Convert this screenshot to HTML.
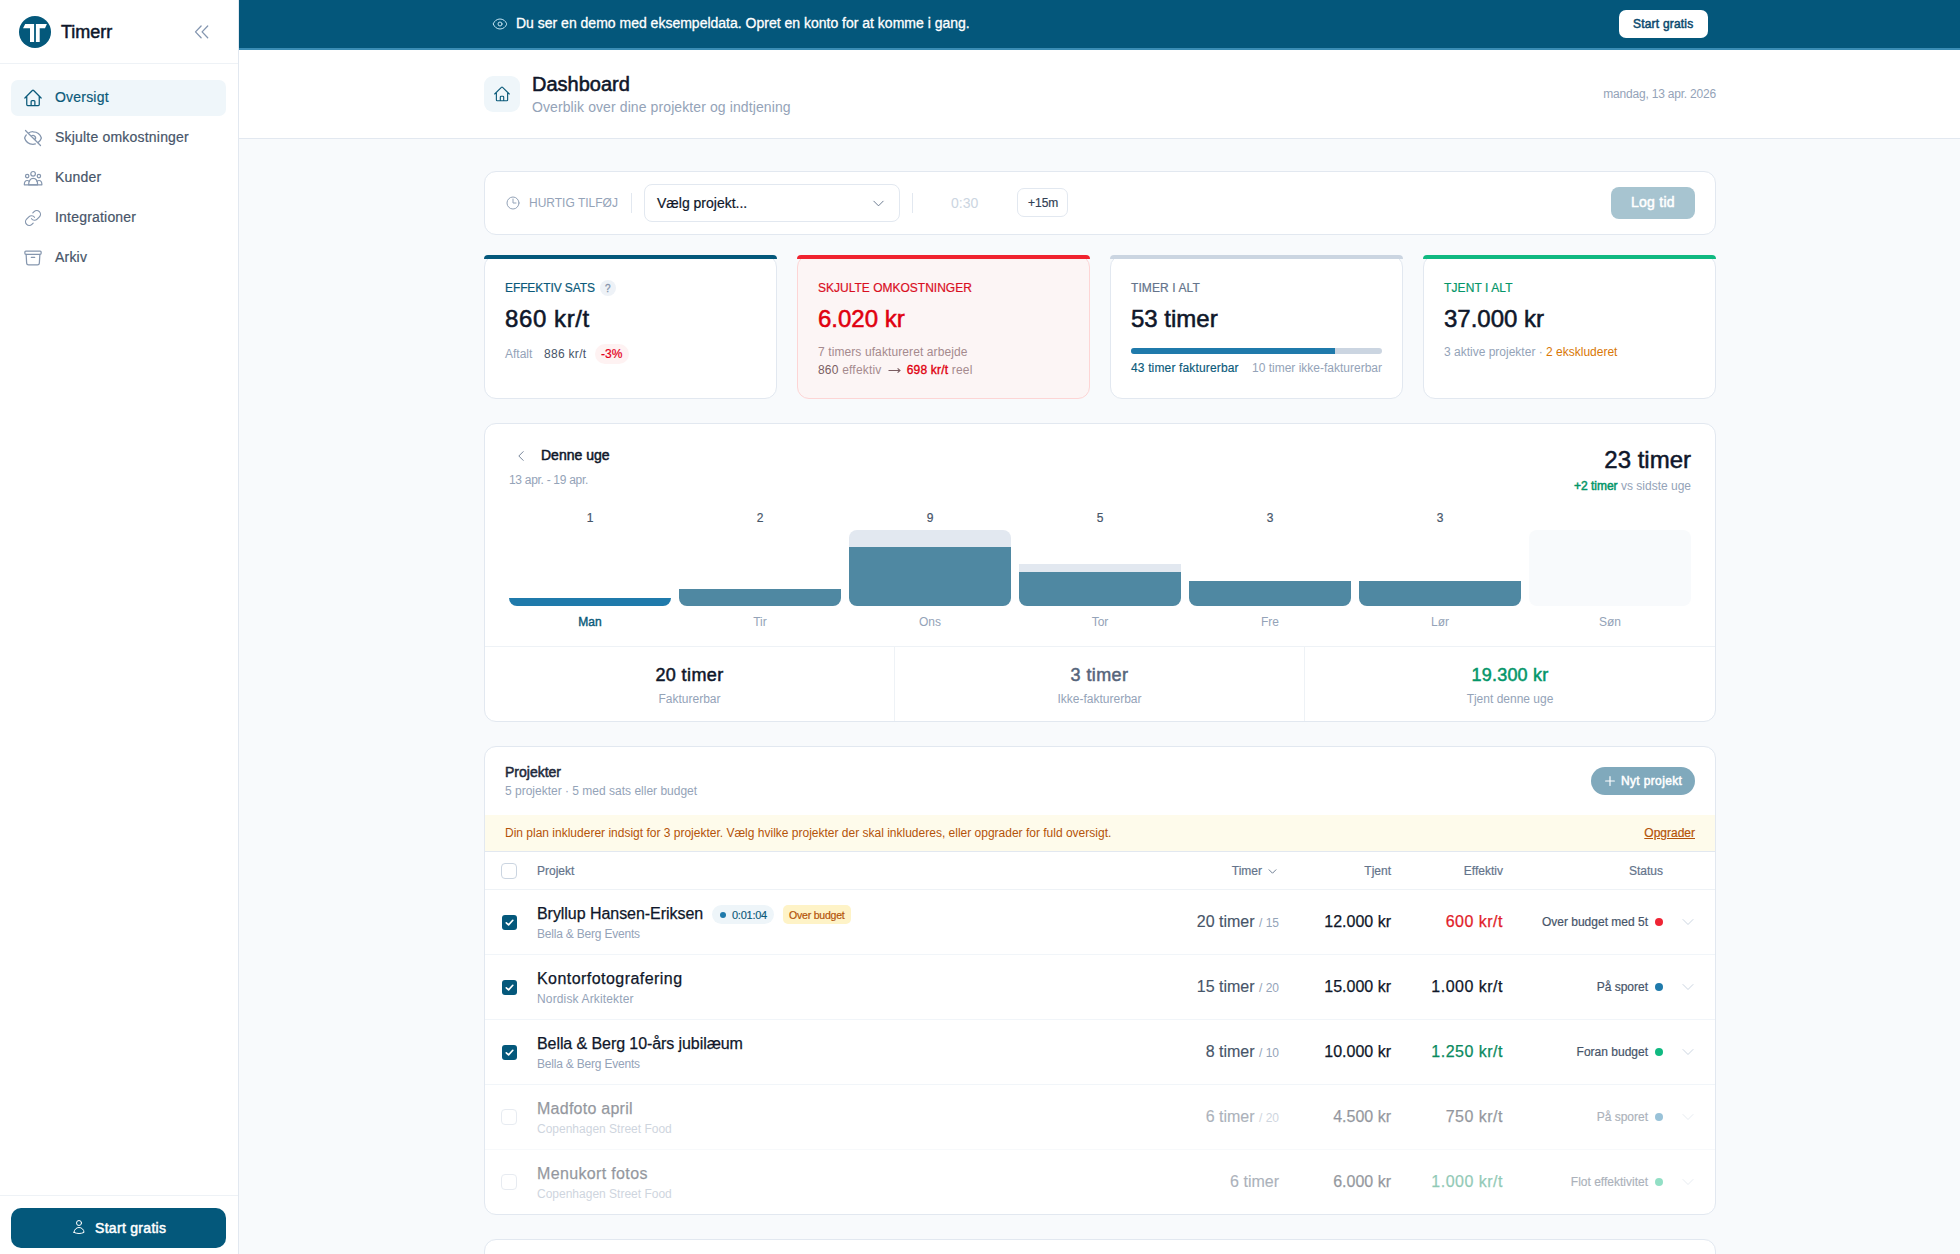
<!DOCTYPE html>
<html lang="da">
<head>
<meta charset="utf-8">
<title>Timerr - Dashboard</title>
<style>
*{box-sizing:border-box;margin:0;padding:0}
html,body{width:1960px;height:1254px;overflow:hidden}
body{background:#f8fafc;font-family:"Liberation Sans",sans-serif;color:#0f172a;position:relative}
.a{position:absolute}
.t{position:absolute;white-space:nowrap;line-height:1}
.b{-webkit-text-stroke:0.5px currentColor}
.m{-webkit-text-stroke:0.25px currentColor}
svg{display:block}
.ico{fill:none;stroke:currentColor;stroke-width:1.5;stroke-linecap:round;stroke-linejoin:round}
/* sidebar */
#side{left:0;top:0;width:239px;height:1254px;background:#fff;border-right:1px solid #e2e8f0}
.nav{left:11px;width:215px;height:36px;border-radius:7px}
.nav.on{background:#eff6fa}
.navt{left:55px;font-size:14px;color:#475569;letter-spacing:0.2px;-webkit-text-stroke:0.2px currentColor}
.navi{left:23px;color:#8596ae}
/* cards */
.card{position:absolute;background:#fff;border:1px solid #e2e8f0;border-radius:12px}
.stat{top:255px;width:293px;height:144px}
.band{position:absolute;top:255px;width:293px;height:4px;border-radius:12px 12px 0 0}
.lbl{font-size:12px;letter-spacing:0.1px;-webkit-text-stroke:0.2px currentColor}
.big{font-size:24px;-webkit-text-stroke:0.55px currentColor}
.mut{color:#94a3b8}
</style>
</head>
<body>

<!-- SIDEBAR -->
<div id="side" class="a">
  <div class="a" style="left:0;top:63px;width:238px;height:1px;background:#eef2f6"></div>
  <svg class="a" style="left:19px;top:16px" width="32" height="32" viewBox="0 0 32 32">
    <circle cx="16" cy="16" r="16" fill="#04587b"/>
    <path d="M6.2 8H15.1V26H11V12.3H4Z M16.9 8H27.9L26 12.3H20.7V26H16.9Z" fill="#fff"/>
  </svg>
  <div class="t" style="left:61px;top:22.8px;font-size:18px;color:#0f172a;-webkit-text-stroke:0.5px #0f172a">Timerr</div>
  <svg class="a" style="left:188px;top:20px" width="28" height="26" viewBox="0 0 28 26"><path d="M13.1 6 7.5 11.9 13.1 17.8M19.7 6 14.1 11.9 19.7 17.8" fill="none" stroke="#8496b0" stroke-width="1.3" stroke-linecap="round" stroke-linejoin="round"/></svg>

  <div class="a nav on" style="top:80px"></div>
  <svg class="a ico navi" style="top:88px;color:#0b5a7a" width="20" height="20" viewBox="0 0 24 24"><path d="m2.25 12 8.954-8.955c.44-.439 1.152-.439 1.591 0L21.75 12M4.5 9.75v10.125c0 .621.504 1.125 1.125 1.125H9.75v-4.875c0-.621.504-1.125 1.125-1.125h2.25c.621 0 1.125.504 1.125 1.125V21h4.125c.621 0 1.125-.504 1.125-1.125V9.75M8.25 21h8.25"/></svg>
  <div class="t navt" style="top:90.35px;color:#0b5a7a">Oversigt</div>

  <svg class="a ico navi" style="top:128px" width="20" height="20" viewBox="0 0 24 24"><path d="M3.98 8.223A10.477 10.477 0 0 0 1.934 12C3.226 16.338 7.244 19.5 12 19.5c.993 0 1.953-.138 2.863-.395M6.228 6.228A10.451 10.451 0 0 1 12 4.5c4.756 0 8.773 3.162 10.065 7.498a10.522 10.522 0 0 1-4.293 5.774M6.228 6.228 3 3m3.228 3.228 3.65 3.65m7.894 7.894L21 21m-3.228-3.228-3.65-3.65m0 0a3 3 0 1 0-4.243-4.243m4.242 4.242L9.88 9.88"/></svg>
  <div class="t navt" style="top:130.35px">Skjulte omkostninger</div>

  <svg class="a navi" style="top:168px" width="20" height="20" viewBox="0 0 20 20" fill="none" stroke="currentColor" stroke-width="1.2" stroke-linecap="round" stroke-linejoin="round"><circle cx="10.1" cy="5.8" r="2.3"/><circle cx="4.2" cy="8.1" r="1.7"/><circle cx="15.9" cy="8.1" r="1.7"/><path d="M5.6 16.8C5.6 12.8 7.6 10.4 10.1 10.4S14.6 12.8 14.6 16.8Z"/><path d="M1.3 16.8C1.3 14.2 2.5 12.5 4.2 12.5 4.9 12.5 5.6 12.8 6.2 13.3M18.9 16.8C18.9 14.2 17.7 12.5 16 12.5 15.3 12.5 14.6 12.8 14 13.3M1.3 16.8H18.9"/></svg>
  <div class="t navt" style="top:170.35px">Kunder</div>

  <svg class="a navi" style="top:209px;left:24px" width="18" height="18" viewBox="0 0 24 24" fill="none" stroke="currentColor" stroke-width="1.6" stroke-linecap="round" stroke-linejoin="round"><path d="M10 13a5 5 0 0 0 7.54.54l3-3a5 5 0 0 0-7.07-7.07l-1.72 1.71"/><path d="M14 11a5 5 0 0 0-7.54-.54l-3 3a5 5 0 0 0 7.07 7.07l1.71-1.71"/></svg>
  <div class="t navt" style="top:210.35px">Integrationer</div>

  <svg class="a ico navi" style="top:248px" width="20" height="20" viewBox="0 0 24 24"><path d="m20.25 7.5-.625 10.632a2.25 2.25 0 0 1-2.247 2.118H6.622a2.25 2.25 0 0 1-2.247-2.118L3.75 7.5M10 11.25h4M3.375 7.5h17.25c.621 0 1.125-.504 1.125-1.125v-1.5c0-.621-.504-1.125-1.125-1.125H3.375c-.621 0-1.125.504-1.125 1.125v1.5c0 .621.504 1.125 1.125 1.125Z"/></svg>
  <div class="t navt" style="top:250.35px">Arkiv</div>

  <div class="a" style="left:0;top:1195px;width:238px;height:1px;background:#eef2f6"></div>
  <div class="a" style="left:11px;top:1208px;width:215px;height:40px;border-radius:10px;background:#04587b"></div>
  <svg class="a ico" style="left:71px;top:1219px;color:#fff" width="16" height="16" viewBox="0 0 24 24"><path d="M15.75 6a3.75 3.75 0 1 1-7.5 0 3.75 3.75 0 0 1 7.5 0ZM4.501 20.118a7.5 7.5 0 0 1 14.998 0A17.933 17.933 0 0 1 12 21.75c-2.676 0-5.216-.584-7.499-1.632Z"/></svg>
  <div class="t b" style="left:95px;top:1220.95px;font-size:14px;color:#fff;letter-spacing:0.3px">Start gratis</div>
</div>

<!-- BANNER -->
<div class="a" style="left:239px;top:0;width:1721px;height:50px;background:#04577b;border-bottom:2px solid #3a8db5"></div>
<svg class="a ico" style="left:492px;top:16px;color:#c4e4f2" width="16" height="16" viewBox="0 0 24 24"><path d="M2.036 12.322a1.012 1.012 0 0 1 0-.639C3.423 7.51 7.36 4.5 12 4.5c4.638 0 8.573 3.007 9.963 7.178.07.207.07.431 0 .639C20.577 16.49 16.64 19.5 12 19.5c-4.638 0-8.573-3.007-9.963-7.178Z M15 12a3 3 0 1 1-6 0 3 3 0 0 1 6 0Z"/></svg>
<div class="t" style="left:516px;top:16.15px;font-size:14px;color:#fff;-webkit-text-stroke:0.3px #fff">Du ser en demo med eksempeldata. Opret en konto for at komme i gang.</div>
<div class="a" style="left:1619px;top:10px;width:89px;height:28px;border-radius:7px;background:#fff"></div>
<div class="t b" style="left:1633px;top:17.64px;font-size:12px;color:#0c4a6e;letter-spacing:0.2px">Start gratis</div>

<!-- HEADER -->
<div class="a" style="left:239px;top:50px;width:1721px;height:89px;background:#fff;border-bottom:1px solid #e2e8f0"></div>
<div class="a" style="left:484px;top:76px;width:36px;height:36px;border-radius:9px;background:#eff6fa"></div>
<svg class="a ico" style="left:493px;top:85px;color:#0b5a7a" width="18" height="18" viewBox="0 0 24 24"><path d="m2.25 12 8.954-8.955c.44-.439 1.152-.439 1.591 0L21.75 12M4.5 9.75v10.125c0 .621.504 1.125 1.125 1.125H9.75v-4.875c0-.621.504-1.125 1.125-1.125h2.25c.621 0 1.125.504 1.125 1.125V21h4.125c.621 0 1.125-.504 1.125-1.125V9.75M8.25 21h8.25"/></svg>
<div class="t" style="left:532px;top:74.17px;font-size:20px;color:#0f172a;-webkit-text-stroke:0.55px #0f172a">Dashboard</div>
<div class="t mut" style="left:532px;top:100.15px;font-size:14px;letter-spacing:0.1px">Overblik over dine projekter og indtjening</div>
<div class="t mut" style="right:244px;top:88.44px;font-size:12px;letter-spacing:-0.2px">mandag, 13 apr. 2026</div>

<!-- QUICK ADD -->
<div class="card" style="left:484px;top:171px;width:1232px;height:64px"></div>
<svg class="a ico" style="left:505px;top:195px;color:#94a3b8" width="16" height="16" viewBox="0 0 24 24"><path d="M12 6v6h4.5m4.5 0a9 9 0 1 1-18 0 9 9 0 0 1 18 0Z"/></svg>
<div class="t mut" style="left:529px;top:196.64px;font-size:12px">HURTIG TILFØJ</div>
<div class="a" style="left:631px;top:193px;width:1px;height:20px;background:#e2e8f0"></div>
<div class="a" style="left:644px;top:184px;width:256px;height:38px;border:1px solid #e2e8f0;border-radius:8px;background:#fff"></div>
<div class="t" style="left:657px;top:195.75px;font-size:14px;color:#0f172a;-webkit-text-stroke:0.2px #0f172a">Vælg projekt...</div>
<svg class="a ico" style="left:871px;top:196px;color:#64748b" width="15" height="15" viewBox="0 0 24 24"><path d="m19.5 8.25-7.5 7.5-7.5-7.5"/></svg>
<div class="a" style="left:912px;top:193px;width:1px;height:20px;background:#e2e8f0"></div>
<div class="t" style="left:951px;top:195.75px;font-size:14px;color:#cbd5e1">0:30</div>
<div class="a" style="left:1017px;top:188px;width:51px;height:29px;border:1px solid #e2e8f0;border-radius:7px;background:#fff"></div>
<div class="t" style="left:1028px;top:197px;font-size:12px;color:#334155;-webkit-text-stroke:0.2px #334155">+15m</div>
<div class="a" style="left:1611px;top:187px;width:84px;height:32px;border-radius:8px;background:#a7c4d0"></div>
<div class="t b" style="left:1631px;top:195.15px;font-size:14px;color:#fff;letter-spacing:0.25px">Log tid</div>

<!-- STAT CARDS -->
<div class="card stat" style="left:484px;"></div><div class="band" style="left:484px;background:#04587b"></div>
<div class="t lbl" style="left:505px;top:281.64px;color:#0b5a7a;letter-spacing:-0.1px">EFFEKTIV SATS</div>
<div class="a" style="left:600px;top:280px;width:16px;height:16px;border-radius:8px;background:#eef2f7"></div>
<div class="t" style="left:605px;top:283.5px;font-size:10px;color:#8594ab;-webkit-text-stroke:0.3px #8594ab">?</div>
<div class="t big" style="left:505px;top:307.28px;color:#0f172a;letter-spacing:0.6px">860 kr/t</div>
<div class="t mut" style="left:505px;top:347.64px;font-size:12px">Aftalt</div>
<div class="t" style="left:544px;top:347.64px;font-size:12px;color:#475569;letter-spacing:0.3px">886 kr/t</div>
<div class="a" style="left:595px;top:344px;width:34px;height:20px;border-radius:10px;background:#fef2f2"></div>
<div class="t" style="left:601px;top:347.64px;font-size:12px;color:#e3001b;-webkit-text-stroke:0.2px #e3001b">-3%</div>

<div class="card stat" style="left:797px;border-color:#fdd5d5;background:#fcf5f5;"></div><div class="band" style="left:797px;background:#f0232f"></div>
<div class="t lbl" style="left:818px;top:281.64px;color:#d90f1f;letter-spacing:0px">SKJULTE OMKOSTNINGER</div>
<div class="t big" style="left:818px;top:307.28px;color:#e0000f">6.020 kr</div>
<div class="t" style="left:818px;top:345.74px;font-size:12px;color:#a58a8e;letter-spacing:0.1px">7 timers ufaktureret arbejde</div>
<div class="t" style="left:818px;top:363.54px;font-size:12px;color:#a58a8e;letter-spacing:0.2px"><span style="color:#7a5d62">860</span> effektiv <svg style="display:inline-block;vertical-align:middle;margin:0 2px 0 3px" width="13" height="8" viewBox="0 0 13 8"><path d="M0.5 4.5H12M9.6 2.3 12 4.5 9.6 6.7" fill="none" stroke="#7a5d62" stroke-width="1.1"/></svg> <span style="color:#e0000f;-webkit-text-stroke:0.35px #e0000f">698 kr/t</span> reel</div>

<div class="card stat" style="left:1110px;"></div><div class="band" style="left:1110px;background:#cbd5e1"></div>
<div class="t lbl" style="left:1131px;top:281.64px;color:#64748b">TIMER I ALT</div>
<div class="t big" style="left:1131px;top:307.28px;color:#0f172a">53 timer</div>
<div class="a" style="left:1131px;top:348px;width:251px;height:6px;border-radius:3px;background:#cbd5e1;overflow:hidden"><div style="width:204px;height:6px;background:#1f7aab"></div></div>
<div class="t" style="left:1131px;top:361.54px;font-size:12px;color:#0b5a7a;letter-spacing:0.15px;-webkit-text-stroke:0.15px #0b5a7a">43 timer fakturerbar</div>
<div class="t mut" style="right:578px;top:361.54px;font-size:12px">10 timer ikke-fakturerbar</div>

<div class="card stat" style="left:1423px;"></div><div class="band" style="left:1423px;background:#10b981"></div>
<div class="t lbl" style="left:1444px;top:281.64px;color:#059669">TJENT I ALT</div>
<div class="t big" style="left:1444px;top:307.28px;color:#0f172a">37.000 kr</div>
<div class="t mut" style="left:1444px;top:345.84px;font-size:12px">3 aktive projekter · <span style="color:#d97706">2 ekskluderet</span></div>

<!-- WEEK CARD -->
<div class="card" style="left:484px;top:423px;width:1232px;height:299px"></div>
<svg class="a ico" style="left:514px;top:449px;color:#64748b" width="14" height="14" viewBox="0 0 24 24"><path d="M15.75 19.5 8.25 12l7.5-7.5"/></svg>
<div class="t b" style="left:541px;top:447.95px;font-size:14px;color:#0f172a">Denne uge</div>
<div class="t mut" style="left:509px;top:473.64px;font-size:12px;letter-spacing:-0.3px">13 apr. - 19 apr.</div>
<div class="t b" style="right:269px;top:447.68px;font-size:24px;color:#0f172a">23 timer</div>
<div class="t mut" style="right:269px;top:479.84px;font-size:12px"><span class="b" style="color:#059669">+2 timer</span> vs sidste uge</div>

<!--CHART-->
<div class="a" style="left:509px;top:530px;width:162px;height:76px;border-radius:8px;overflow:hidden;">
<div class="a" style="left:0;bottom:0;width:162px;height:8px;background:#1f7aab"></div>
</div>
<div class="t" style="left:509px;width:162px;text-align:center;top:511.84px;font-size:12px;color:#475569;-webkit-text-stroke:0.2px #475569">1</div>
<div class="t" style="left:509px;width:162px;text-align:center;top:616.24px;font-size:12px;color:#0b5a7a;-webkit-text-stroke:0.4px #0b5a7a">Man</div>
<div class="a" style="left:679px;top:530px;width:162px;height:76px;border-radius:8px;overflow:hidden;">
<div class="a" style="left:0;bottom:0;width:162px;height:17px;background:#4f88a2"></div>
</div>
<div class="t" style="left:679px;width:162px;text-align:center;top:511.84px;font-size:12px;color:#475569;-webkit-text-stroke:0.2px #475569">2</div>
<div class="t" style="left:679px;width:162px;text-align:center;top:616.24px;font-size:12px;color:#94a3b8">Tir</div>
<div class="a" style="left:849px;top:530px;width:162px;height:76px;border-radius:8px;overflow:hidden;">
<div class="a" style="left:0;bottom:59px;width:162px;height:17px;background:#e2e8f0"></div>
<div class="a" style="left:0;bottom:0;width:162px;height:59px;background:#4f88a2"></div>
</div>
<div class="t" style="left:849px;width:162px;text-align:center;top:511.84px;font-size:12px;color:#475569;-webkit-text-stroke:0.2px #475569">9</div>
<div class="t" style="left:849px;width:162px;text-align:center;top:616.24px;font-size:12px;color:#94a3b8">Ons</div>
<div class="a" style="left:1019px;top:530px;width:162px;height:76px;border-radius:8px;overflow:hidden;">
<div class="a" style="left:0;bottom:34px;width:162px;height:8px;background:#e2e8f0"></div>
<div class="a" style="left:0;bottom:0;width:162px;height:34px;background:#4f88a2"></div>
</div>
<div class="t" style="left:1019px;width:162px;text-align:center;top:511.84px;font-size:12px;color:#475569;-webkit-text-stroke:0.2px #475569">5</div>
<div class="t" style="left:1019px;width:162px;text-align:center;top:616.24px;font-size:12px;color:#94a3b8">Tor</div>
<div class="a" style="left:1189px;top:530px;width:162px;height:76px;border-radius:8px;overflow:hidden;">
<div class="a" style="left:0;bottom:0;width:162px;height:25px;background:#4f88a2"></div>
</div>
<div class="t" style="left:1189px;width:162px;text-align:center;top:511.84px;font-size:12px;color:#475569;-webkit-text-stroke:0.2px #475569">3</div>
<div class="t" style="left:1189px;width:162px;text-align:center;top:616.24px;font-size:12px;color:#94a3b8">Fre</div>
<div class="a" style="left:1359px;top:530px;width:162px;height:76px;border-radius:8px;overflow:hidden;">
<div class="a" style="left:0;bottom:0;width:162px;height:25px;background:#4f88a2"></div>
</div>
<div class="t" style="left:1359px;width:162px;text-align:center;top:511.84px;font-size:12px;color:#475569;-webkit-text-stroke:0.2px #475569">3</div>
<div class="t" style="left:1359px;width:162px;text-align:center;top:616.24px;font-size:12px;color:#94a3b8">Lør</div>
<div class="a" style="left:1529px;top:530px;width:162px;height:76px;border-radius:8px;overflow:hidden;background:#f8fafc;">
</div>
<div class="t" style="left:1529px;width:162px;text-align:center;top:616.24px;font-size:12px;color:#94a3b8">Søn</div>
<!--/CHART-->

<div class="a" style="left:485px;top:646px;width:1230px;height:1px;background:#eef2f6"></div>
<div class="a" style="left:894px;top:647px;width:1px;height:74px;background:#eef2f6"></div>
<div class="a" style="left:1304px;top:647px;width:1px;height:74px;background:#eef2f6"></div>
<div class="t b" style="left:485px;width:409px;text-align:center;top:665.56px;font-size:18px;color:#0f172a;letter-spacing:0.4px">20 timer</div>
<div class="t mut" style="left:485px;width:409px;text-align:center;top:692.74px;font-size:12px">Fakturerbar</div>
<div class="t b" style="left:895px;width:409px;text-align:center;top:665.56px;font-size:18px;color:#56657b;letter-spacing:0.4px">3 timer</div>
<div class="t mut" style="left:895px;width:409px;text-align:center;top:692.74px;font-size:12px">Ikke-fakturerbar</div>
<div class="t b" style="left:1305px;width:410px;text-align:center;top:665.56px;font-size:18px;color:#059669;letter-spacing:0.2px">19.300 kr</div>
<div class="t mut" style="left:1305px;width:410px;text-align:center;top:692.74px;font-size:12px">Tjent denne uge</div>

<!-- PROJECTS -->
<div class="card" style="left:484px;top:746px;width:1232px;height:469px;overflow:hidden"></div>
<!--PROJ-->
<div class="t b" style="left:505px;top:765.15px;font-size:14px;color:#1e293b">Projekter</div>
<div class="t mut" style="left:505px;top:784.94px;font-size:12px">5 projekter · 5 med sats eller budget</div>
<div class="a" style="left:1591px;top:767px;width:104px;height:28px;border-radius:14px;background:#80a9bc"></div>
<svg class="a ico" style="left:1603px;top:774px;color:#fff;stroke-width:2" width="14" height="14" viewBox="0 0 24 24"><path d="M12 4.5v15m7.5-7.5h-15"/></svg>
<div class="t b" style="left:1621px;top:775px;font-size:12px;color:#fff;letter-spacing:0.35px">Nyt projekt</div>
<div class="a" style="left:485px;top:815px;width:1230px;height:37px;background:#fefbeb;border-bottom:1px solid #e2e8f0"></div>
<div class="t" style="left:505px;top:827.44px;font-size:12px;color:#b45309">Din plan inkluderer indsigt for 3 projekter. Vælg hvilke projekter der skal inkluderes, eller opgrader for fuld oversigt.</div>
<div class="t" style="right:265px;top:827.44px;font-size:12px;color:#b45309;text-decoration:underline;-webkit-text-stroke:0.2px #b45309">Opgrader</div>
<div class="a" style="left:501px;top:863px;width:16px;height:16px;border:1px solid #cbd5e1;border-radius:4px;background:#fff"></div>
<div class="t" style="left:537px;font-size:12px;color:#64748b;top:864.64px;-webkit-text-stroke:0.2px #64748b">Projekt</div>
<div class="t" style="right:698px;font-size:12px;color:#64748b;top:864.64px;-webkit-text-stroke:0.2px #64748b">Timer</div>
<svg class="a ico" style="left:1267px;top:866px;color:#64748b;stroke-width:2" width="11" height="11" viewBox="0 0 24 24"><path d="m19.5 8.25-7.5 7.5-7.5-7.5"/></svg>
<div class="t" style="right:569px;font-size:12px;color:#64748b;top:864.64px;-webkit-text-stroke:0.2px #64748b">Tjent</div>
<div class="t" style="right:457px;font-size:12px;color:#64748b;top:864.64px;-webkit-text-stroke:0.2px #64748b">Effektiv</div>
<div class="t" style="right:297px;font-size:12px;color:#64748b;top:864.64px;-webkit-text-stroke:0.2px #64748b">Status</div>
<div class="a" style="left:485px;top:889px;width:1230px;height:1px;background:#eef2f6"></div>
<div class="a" style="left:485px;top:889px;width:1230px;height:65px;">
<div class="a" style="left:17px;top:26px;width:15px;height:15px;border-radius:3px;background:#04587b"></div>
<svg class="a" style="left:19px;top:28px" width="11" height="11" viewBox="0 0 12 12"><path d="M2.5 6.3 5 8.6 9.6 3.6" fill="none" stroke="#fff" stroke-width="1.8" stroke-linecap="round" stroke-linejoin="round"/></svg>
<div class="t" style="left:52px;top:16.66px;font-size:16px;color:#0f172a;letter-spacing:-0.05px;-webkit-text-stroke:0.25px #0f172a">Bryllup Hansen-Eriksen</div>
<div class="t mut" style="left:52px;top:38.84px;font-size:12px;letter-spacing:-0.2px">Bella &amp; Berg Events</div>
<div class="a" style="left:227px;top:16px;width:62px;height:19px;border-radius:10px;background:#eef5f9"></div>
<div class="a" style="left:235px;top:23px;width:6px;height:6px;border-radius:3px;background:#1f7aab"></div>
<div class="t" style="left:247px;top:21px;font-size:11px;color:#0b5a7a;letter-spacing:-0.25px;-webkit-text-stroke:0.15px #0b5a7a">0:01:04</div>
<div class="a" style="left:298px;top:16px;width:68px;height:19px;border-radius:5px;background:#fef3c7"></div>
<div class="t" style="left:304px;top:21.3px;font-size:10.5px;color:#b45309;letter-spacing:-0.2px;-webkit-text-stroke:0.2px #b45309">Over budget</div>
<div class="t" style="right:436px;top:25px;font-size:16px;color:#475569;-webkit-text-stroke:0.15px #475569">20 timer <span style="font-size:12px;color:#94a3b8;-webkit-text-stroke:0">/ 15</span></div>
<div class="t" style="right:324px;top:25px;font-size:16px;color:#0f172a;-webkit-text-stroke:0.25px #0f172a">12.000 kr</div>
<div class="t" style="right:212px;top:25px;font-size:16px;letter-spacing:0.5px;color:#e11d2a;-webkit-text-stroke:0.25px #e11d2a">600 kr/t</div>
<div class="t" style="right:67px;top:26.84px;font-size:12px;color:#475569;-webkit-text-stroke:0.2px #475569">Over budget med 5t</div>
<div class="a" style="left:1170px;top:29px;width:8px;height:8px;border-radius:4px;background:#ef2434"></div>
<svg class="a ico" style="left:1195px;top:25px;color:#cbd5e1" width="16" height="16" viewBox="0 0 24 24"><path d="m19.5 8.25-7.5 7.5-7.5-7.5"/></svg>
</div>
<div class="a" style="left:485px;top:954px;width:1230px;height:1px;background:#f1f5f9"></div>
<div class="a" style="left:485px;top:954px;width:1230px;height:65px;">
<div class="a" style="left:17px;top:26px;width:15px;height:15px;border-radius:3px;background:#04587b"></div>
<svg class="a" style="left:19px;top:28px" width="11" height="11" viewBox="0 0 12 12"><path d="M2.5 6.3 5 8.6 9.6 3.6" fill="none" stroke="#fff" stroke-width="1.8" stroke-linecap="round" stroke-linejoin="round"/></svg>
<div class="t" style="left:52px;top:16.66px;font-size:16px;color:#0f172a;letter-spacing:0.45px;-webkit-text-stroke:0.25px #0f172a">Kontorfotografering</div>
<div class="t mut" style="left:52px;top:38.84px;font-size:12px;letter-spacing:0.15px">Nordisk Arkitekter</div>
<div class="t" style="right:436px;top:25px;font-size:16px;color:#475569;-webkit-text-stroke:0.15px #475569">15 timer <span style="font-size:12px;color:#94a3b8;-webkit-text-stroke:0">/ 20</span></div>
<div class="t" style="right:324px;top:25px;font-size:16px;color:#0f172a;-webkit-text-stroke:0.25px #0f172a">15.000 kr</div>
<div class="t" style="right:212px;top:25px;font-size:16px;letter-spacing:0.5px;color:#0f172a;-webkit-text-stroke:0.25px #0f172a">1.000 kr/t</div>
<div class="t" style="right:67px;top:26.84px;font-size:12px;color:#475569;-webkit-text-stroke:0.2px #475569">På sporet</div>
<div class="a" style="left:1170px;top:29px;width:8px;height:8px;border-radius:4px;background:#1f7aab"></div>
<svg class="a ico" style="left:1195px;top:25px;color:#cbd5e1" width="16" height="16" viewBox="0 0 24 24"><path d="m19.5 8.25-7.5 7.5-7.5-7.5"/></svg>
</div>
<div class="a" style="left:485px;top:1019px;width:1230px;height:1px;background:#f1f5f9"></div>
<div class="a" style="left:485px;top:1019px;width:1230px;height:65px;">
<div class="a" style="left:17px;top:26px;width:15px;height:15px;border-radius:3px;background:#04587b"></div>
<svg class="a" style="left:19px;top:28px" width="11" height="11" viewBox="0 0 12 12"><path d="M2.5 6.3 5 8.6 9.6 3.6" fill="none" stroke="#fff" stroke-width="1.8" stroke-linecap="round" stroke-linejoin="round"/></svg>
<div class="t" style="left:52px;top:16.66px;font-size:16px;color:#0f172a;letter-spacing:-0.08px;-webkit-text-stroke:0.25px #0f172a">Bella &amp; Berg 10-års jubilæum</div>
<div class="t mut" style="left:52px;top:38.84px;font-size:12px;letter-spacing:-0.2px">Bella &amp; Berg Events</div>
<div class="t" style="right:436px;top:25px;font-size:16px;color:#475569;-webkit-text-stroke:0.15px #475569">8 timer <span style="font-size:12px;color:#94a3b8;-webkit-text-stroke:0">/ 10</span></div>
<div class="t" style="right:324px;top:25px;font-size:16px;color:#0f172a;-webkit-text-stroke:0.25px #0f172a">10.000 kr</div>
<div class="t" style="right:212px;top:25px;font-size:16px;letter-spacing:0.5px;color:#0a8a60;-webkit-text-stroke:0.25px #0a8a60">1.250 kr/t</div>
<div class="t" style="right:67px;top:26.84px;font-size:12px;color:#475569;-webkit-text-stroke:0.2px #475569">Foran budget</div>
<div class="a" style="left:1170px;top:29px;width:8px;height:8px;border-radius:4px;background:#10b981"></div>
<svg class="a ico" style="left:1195px;top:25px;color:#cbd5e1" width="16" height="16" viewBox="0 0 24 24"><path d="m19.5 8.25-7.5 7.5-7.5-7.5"/></svg>
</div>
<div class="a" style="left:485px;top:1084px;width:1230px;height:1px;background:#f1f5f9"></div>
<div class="a" style="left:485px;top:1084px;width:1230px;height:65px;opacity:0.45;">
<div class="a" style="left:16px;top:25px;width:16px;height:16px;border-radius:4px;border:1px solid #cbd5e1;background:#fff"></div>
<div class="t" style="left:52px;top:16.66px;font-size:16px;color:#0f172a;letter-spacing:0.25px;-webkit-text-stroke:0.25px #0f172a">Madfoto april</div>
<div class="t mut" style="left:52px;top:38.84px;font-size:12px;letter-spacing:0px">Copenhagen Street Food</div>
<div class="t" style="right:436px;top:25px;font-size:16px;color:#475569;-webkit-text-stroke:0.15px #475569">6 timer <span style="font-size:12px;color:#94a3b8;-webkit-text-stroke:0">/ 20</span></div>
<div class="t" style="right:324px;top:25px;font-size:16px;color:#0f172a;-webkit-text-stroke:0.25px #0f172a">4.500 kr</div>
<div class="t" style="right:212px;top:25px;font-size:16px;letter-spacing:0.5px;color:#0f172a;-webkit-text-stroke:0.25px #0f172a">750 kr/t</div>
<div class="t" style="right:67px;top:26.84px;font-size:12px;color:#475569;-webkit-text-stroke:0.2px #475569">På sporet</div>
<div class="a" style="left:1170px;top:29px;width:8px;height:8px;border-radius:4px;background:#1f7aab"></div>
<svg class="a ico" style="left:1195px;top:25px;color:#cbd5e1" width="16" height="16" viewBox="0 0 24 24"><path d="m19.5 8.25-7.5 7.5-7.5-7.5"/></svg>
</div>
<div class="a" style="left:485px;top:1149px;width:1230px;height:1px;background:#f7f9fb"></div>
<div class="a" style="left:485px;top:1149px;width:1230px;height:65px;opacity:0.45;">
<div class="a" style="left:16px;top:25px;width:16px;height:16px;border-radius:4px;border:1px solid #cbd5e1;background:#fff"></div>
<div class="t" style="left:52px;top:16.66px;font-size:16px;color:#0f172a;letter-spacing:0.35px;-webkit-text-stroke:0.25px #0f172a">Menukort fotos</div>
<div class="t mut" style="left:52px;top:38.84px;font-size:12px;letter-spacing:0px">Copenhagen Street Food</div>
<div class="t" style="right:436px;top:25px;font-size:16px;color:#475569;-webkit-text-stroke:0.15px #475569">6 timer</div>
<div class="t" style="right:324px;top:25px;font-size:16px;color:#0f172a;-webkit-text-stroke:0.25px #0f172a">6.000 kr</div>
<div class="t" style="right:212px;top:25px;font-size:16px;letter-spacing:0.5px;color:#0a8a60;-webkit-text-stroke:0.25px #0a8a60">1.000 kr/t</div>
<div class="t" style="right:67px;top:26.84px;font-size:12px;color:#475569;-webkit-text-stroke:0.2px #475569">Flot effektivitet</div>
<div class="a" style="left:1170px;top:29px;width:8px;height:8px;border-radius:4px;background:#10b981"></div>
<svg class="a ico" style="left:1195px;top:25px;color:#cbd5e1" width="16" height="16" viewBox="0 0 24 24"><path d="m19.5 8.25-7.5 7.5-7.5-7.5"/></svg>
</div>
<!--/PROJ-->

<div class="card" style="left:484px;top:1239px;width:1232px;height:100px"></div>

</body>
</html>
